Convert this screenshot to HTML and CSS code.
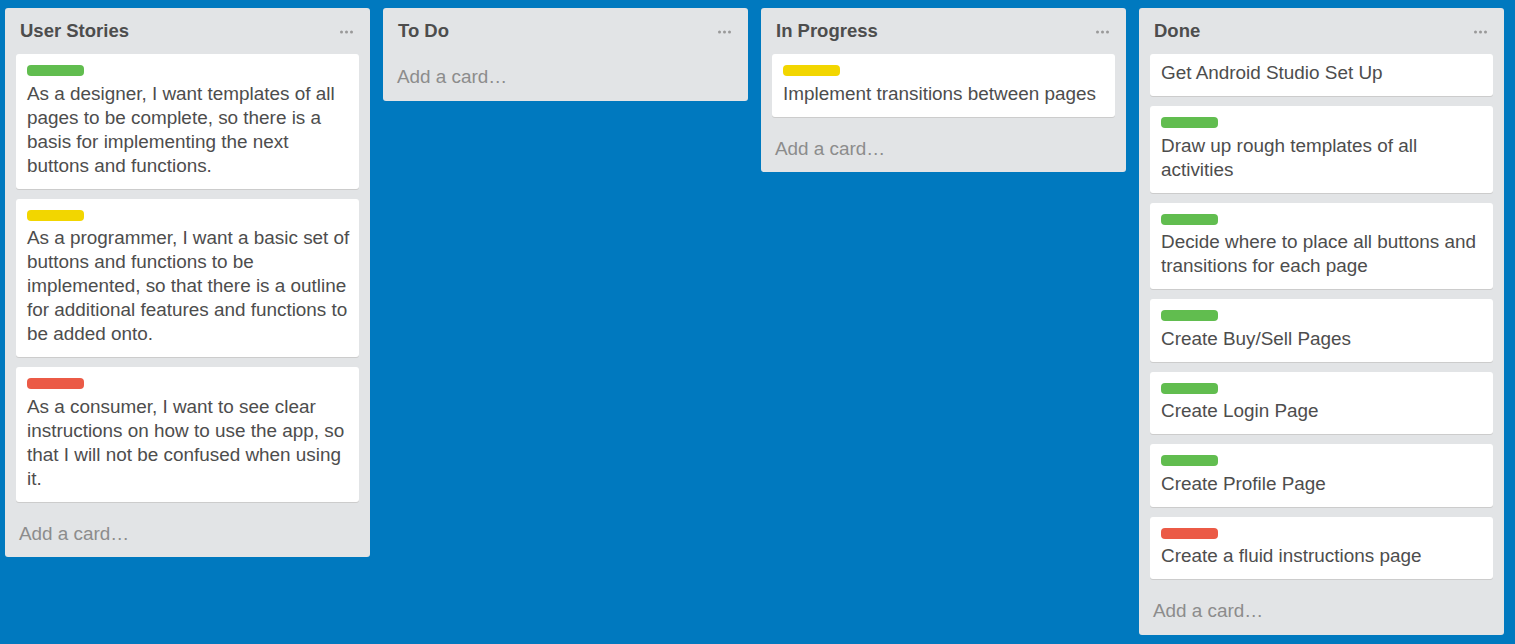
FILE: index.html
```html
<!DOCTYPE html>
<html>
<head>
<meta charset="utf-8">
<link rel="stylesheet" href="styles.css">
</head>
<body>
<div class="board">
  <div class="list">
    <div class="list-header">
      <h2 class="list-title">User Stories</h2>
      <svg class="dots" width="13" height="4" viewBox="0 0 13 4"><circle cx="1.5" cy="2" r="1.5"/><circle cx="6.5" cy="2" r="1.5"/><circle cx="11.5" cy="2" r="1.5"/></svg>
    </div>
    <div class="cards">
      <div class="card"><span class="label green"></span><div class="card-text">As a designer, I want templates of all pages to be complete, so there is a basis for implementing the next buttons and functions.</div></div>
      <div class="card"><span class="label yellow"></span><div class="card-text">As a programmer, I want a basic set of buttons and functions to be implemented, so that there is a outline for additional features and functions to be added onto.</div></div>
      <div class="card"><span class="label red"></span><div class="card-text">As a consumer, I want to see clear instructions on how to use the app, so that I will not be confused when using it.</div></div>
    </div>
    <div class="add-card">Add a card…</div>
  </div>

  <div class="list">
    <div class="list-header">
      <h2 class="list-title">To Do</h2>
      <svg class="dots" width="13" height="4" viewBox="0 0 13 4"><circle cx="1.5" cy="2" r="1.5"/><circle cx="6.5" cy="2" r="1.5"/><circle cx="11.5" cy="2" r="1.5"/></svg>
    </div>
    <div class="add-card">Add a card…</div>
  </div>

  <div class="list">
    <div class="list-header">
      <h2 class="list-title">In Progress</h2>
      <svg class="dots" width="13" height="4" viewBox="0 0 13 4"><circle cx="1.5" cy="2" r="1.5"/><circle cx="6.5" cy="2" r="1.5"/><circle cx="11.5" cy="2" r="1.5"/></svg>
    </div>
    <div class="cards">
      <div class="card"><span class="label yellow"></span><div class="card-text">Implement transitions between pages</div></div>
    </div>
    <div class="add-card">Add a card…</div>
  </div>

  <div class="list">
    <div class="list-header">
      <h2 class="list-title">Done</h2>
      <svg class="dots" width="13" height="4" viewBox="0 0 13 4"><circle cx="1.5" cy="2" r="1.5"/><circle cx="6.5" cy="2" r="1.5"/><circle cx="11.5" cy="2" r="1.5"/></svg>
    </div>
    <div class="cards">
      <div class="card"><div class="card-text">Get Android Studio Set Up</div></div>
      <div class="card"><span class="label green"></span><div class="card-text">Draw up rough templates of all activities</div></div>
      <div class="card"><span class="label green"></span><div class="card-text">Decide where to place all buttons and transitions for each page</div></div>
      <div class="card"><span class="label green"></span><div class="card-text">Create Buy/Sell Pages</div></div>
      <div class="card"><span class="label green"></span><div class="card-text">Create Login Page</div></div>
      <div class="card"><span class="label green"></span><div class="card-text">Create Profile Page</div></div>
      <div class="card"><span class="label red"></span><div class="card-text">Create a fluid instructions page</div></div>
    </div>
    <div class="add-card">Add a card…</div>
  </div>
</div>
</body>
</html>
```

FILE: styles.css
```css
* { box-sizing: border-box; }
html, body {
  margin: 0;
  padding: 0;
  height: 100%;
}
body {
  background: #0079bf;
  font-family: "Liberation Sans", Arial, Helvetica, sans-serif;
  color: #4d4d4d;
  overflow: hidden;
}
.board {
  display: flex;
  align-items: flex-start;
  gap: 13px;
  padding: 8px 5px;
}
.list {
  width: 365px;
  flex: 0 0 365px;
  background: #e2e4e6;
  border-radius: 3px;
  display: flex;
  flex-direction: column;
}
.list-header {
  height: 46px;
  display: flex;
  align-items: center;
  justify-content: space-between;
  padding: 0 17px 0 15px;
}
.list-title {
  margin: 0;
  font-size: 18.5px;
  font-weight: 700;
  line-height: 24px;
  color: #4d4d4d;
}
.dots {
  fill: #999;
  margin-top: 2px;
}
.cards {
  display: flex;
  flex-direction: column;
  gap: 10px;
  padding: 0 11px;
  margin-bottom: 9px;
}
.card {
  background: #fff;
  border-radius: 3px;
  box-shadow: 0 1px 0 #ccc;
  padding: 7px 8px 11px 11px;
}
.label {
  display: block;
  width: 57px;
  height: 11px;
  border-radius: 4px;
  margin: 4px 0 5.5px;
}
.green { background: #61bd4f; }
.yellow { background: #f2d600; }
.red { background: #eb5a46; }
.card-text {
  font-size: 18.9px;
  line-height: 24px;
  color: #4d4d4d;
}
.add-card {
  height: 46.5px;
  display: flex;
  align-items: center;
  padding: 0 14px;
  font-size: 18.9px;
  color: #8c8c8c;
}
```
